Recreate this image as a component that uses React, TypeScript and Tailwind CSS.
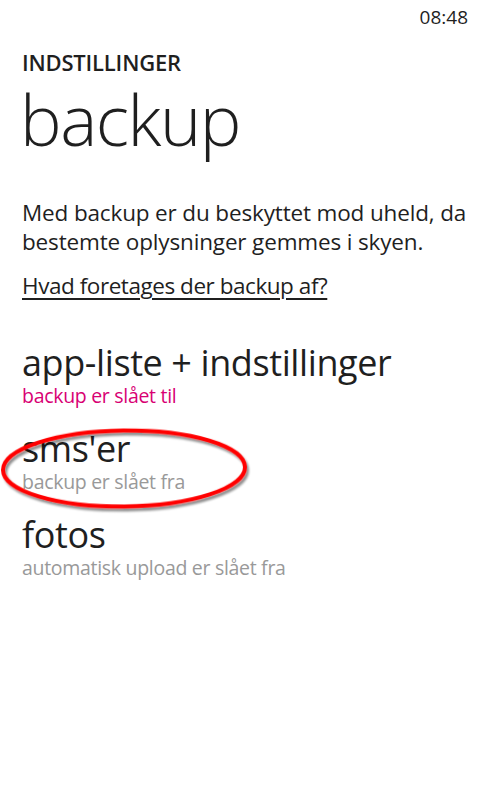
import React from 'react';

const items = [
  { title: 'app-liste + indstillinger', status: 'backup er slået til', on: true },
  { title: "sms'er", status: 'backup er slået fra', on: false },
  { title: 'fotos', status: 'automatisk upload er slået fra', on: false },
];

const Ring: React.FC = () => (
  <svg
    className="absolute left-0 top-[425px] pointer-events-none"
    width="260"
    height="95"
    viewBox="0 0 260 95"
  >
    <defs>
      <filter id="shade" x="-10%" y="-20%" width="130%" height="150%">
        <feGaussianBlur in="SourceAlpha" stdDeviation="1.2" />
        <feOffset dx="2" dy="3" result="blur" />
        <feComponentTransfer>
          <feFuncA type="linear" slope="0.45" />
        </feComponentTransfer>
        <feMerge>
          <feMergeNode />
          <feMergeNode in="SourceGraphic" />
        </feMerge>
      </filter>
    </defs>
    <ellipse
      cx="124"
      cy="43.5"
      rx="121"
      ry="38"
      fill="none"
      stroke="#ff0000"
      strokeWidth="4"
      transform="rotate(-0.7 124 43.5)"
      filter="url(#shade)"
    />
  </svg>
);

export default function App() {
  return (
    <div
      className="relative w-[480px] h-[800px] bg-white text-[#1f1f1f] overflow-hidden"
      style={{ fontFamily: '"Open Sans", "Noto Sans", sans-serif' }}
    >
      <div className="flex justify-end pr-[12px] pt-[4px] h-[32px] text-[19px] leading-[26px]">08:48</div>

      <div className="pl-[22px] pt-[16px]">
        <div className="text-[22px] leading-[28px] font-semibold tracking-[-0.2px]">INDSTILLINGER</div>
        <div className="text-[70px] leading-[86px] font-light tracking-[-1.5px] -ml-[2px]">backup</div>

        <p className="mt-[36px] text-[22.5px] leading-[29px] tracking-[-0.15px]">
          Med backup er du beskyttet mod uheld, da
          <br />
          bestemte oplysninger gemmes i skyen.
        </p>
        <div className="mt-[15px] text-[22.5px] leading-[29px] tracking-[-0.45px] underline underline-offset-[4px]">
          Hvad foretages der backup af?
        </div>

        <div className="mt-[43px] flex flex-col gap-[20px]">
          {items.map((item) => (
            <div key={item.title} className="flex flex-col">
              <div className="text-[36px] leading-[40px] tracking-[-0.4px]">{item.title}</div>
              <div
                className={
                  item.on
                    ? 'text-[19.5px] leading-[26px] text-[#d80073] tracking-[-0.3px]'
                    : 'text-[19.5px] leading-[26px] text-[#999999] tracking-[-0.3px]'
                }
              >
                {item.status}
              </div>
            </div>
          ))}
        </div>
      </div>

      <Ring />
    </div>
  );
}
